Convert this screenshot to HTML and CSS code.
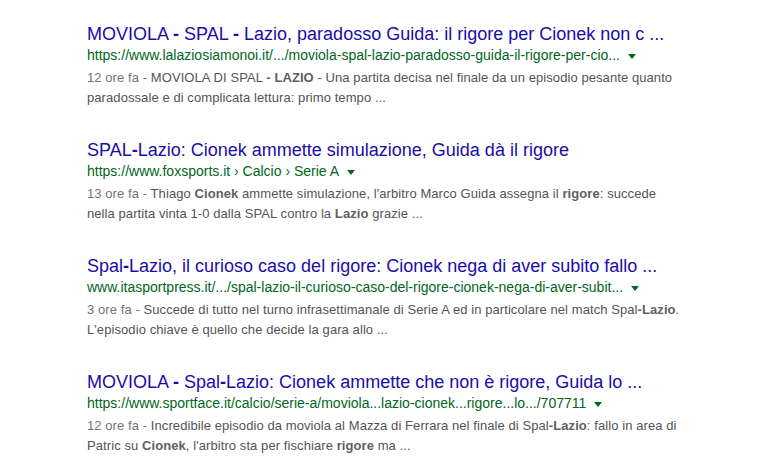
FILE: index.html
```html
<!DOCTYPE html>
<html>
<head>
    <link rel="stylesheet" href="styles.css">
</head>
<body>
    <div class="results">
        <!-- Result 1 -->
        <div class="result">
            <h3 class="title">MOVIOLA <b>-</b> SPAL <b>-</b> Lazio, paradosso Guida: il rigore per Cionek non c ...</h3>
            <div class="url"><cite>https://www.lalaziosiamonoi.it/.../moviola-spal-lazio-paradosso-guida-il-rigore-per-cio...</cite><span class="arrow"></span></div>
            <div class="snippet"><span class="date">12 ore fa - </span>MOVIOLA DI SPAL <b>-</b> <b>LAZIO</b> - Una partita decisa nel finale da un episodio pesante quanto paradossale e di complicata lettura: primo tempo ...</div>
        </div>
        <!-- Result 2 -->
        <div class="result">
            <h3 class="title">SPAL<b>-</b>Lazio: Cionek ammette simulazione, Guida dà il rigore</h3>
            <div class="url"><cite>https://www.foxsports.it › Calcio › Serie A</cite><span class="arrow"></span></div>
            <div class="snippet"><span class="date">13 ore fa - </span>Thiago <b>Cionek</b> ammette simulazione, l'arbitro Marco Guida assegna il <b>rigore</b>: succede nella partita vinta 1-0 dalla SPAL contro la <b>Lazio</b> grazie ...</div>
        </div>
        <!-- Result 3 -->
        <div class="result">
            <h3 class="title">Spal<b>-</b>Lazio, il curioso caso del rigore: Cionek nega di aver subito fallo ...</h3>
            <div class="url"><cite>www.itasportpress.it/.../spal-lazio-il-curioso-caso-del-rigore-cionek-nega-di-aver-subit...</cite><span class="arrow"></span></div>
            <div class="snippet"><span class="date">3 ore fa - </span>Succede di tutto nel turno infrasettimanale di Serie A ed in particolare nel match <span class="nobr">Spal<b>-Lazio</b>.</span> L'episodio chiave è quello che decide la gara allo ...</div>
        </div>
        <!-- Result 4 -->
        <div class="result">
            <h3 class="title">MOVIOLA <b>-</b> Spal<b>-</b>Lazio: Cionek ammette che non è rigore, Guida lo ...</h3>
            <div class="url"><cite>https://www.sportface.it/calcio/serie-a/moviola...lazio-cionek...rigore...lo.../707711</cite><span class="arrow"></span></div>
            <div class="snippet"><span class="date">12 ore fa - </span>Incredibile episodio da moviola al Mazza di Ferrara nel finale di <span class="nobr">Spal<b>-Lazio</b>:</span> fallo in area di Patric su <b>Cionek</b>, l'arbitro sta per fischiare <b>rigore</b> ma ...</div>
        </div>
    </div>
</body>
</html>
```

FILE: styles.css
```css
body {
    font-family: Arial, "Liberation Sans", sans-serif;
    margin: 0;
    background: #fff;
}
.results {
    padding: 22px 0 0 87px;
}
.result {
    margin-bottom: 30px;
}
.title {
    margin: 0;
    font-size: 18px;
    font-weight: normal;
    line-height: 24px;
    color: #1a0dab;
    white-space: nowrap;
}
.title b {
    font-weight: bold;
}
.url {
    display: flex;
    align-items: center;
    height: 18px;
    margin-bottom: 4px;
}
.url cite {
    font-style: normal;
    font-size: 14px;
    line-height: 18px;
    color: #006621;
    white-space: nowrap;
}
.arrow {
    width: 0;
    height: 0;
    margin: 2px 0 0 8px;
    border-top: 5px solid #006621;
    border-left: 4px solid transparent;
    border-right: 4px solid transparent;
}
.snippet {
    max-width: 600px;
    font-size: 13px;
    line-height: 20px;
    letter-spacing: 0.08px;
    color: #545454;
}
.snippet b {
    color: #5f5f5f;
}
.nobr {
    white-space: nowrap;
}
.date {
    color: #737373;
}
```
